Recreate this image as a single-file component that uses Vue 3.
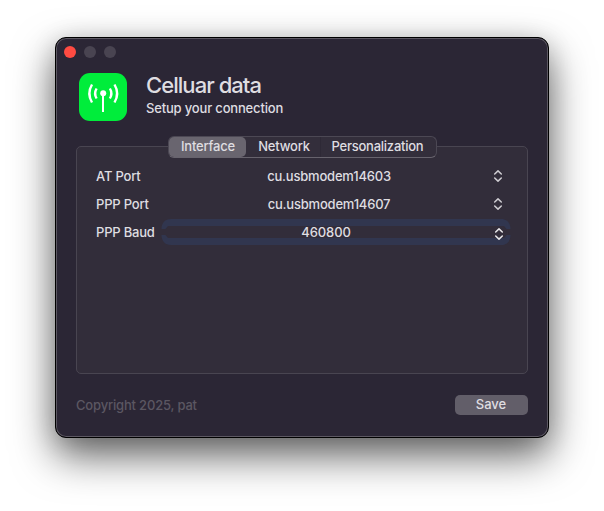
<script setup>
import { ref } from 'vue'

const tabs = [
  { name: 'Interface', cls: 'interface' },
  { name: 'Network', cls: 'network' },
  { name: 'Personalization', cls: 'personalization' },
]
const active = ref('Interface')
const fields = [
  { label: 'AT Port', value: 'cu.usbmodem14603', cls: 'at' },
  { label: 'PPP Port', value: 'cu.usbmodem14607', cls: 'ppp' },
  { label: 'PPP Baud', value: '460800', cls: 'baud', focused: true },
]
</script>

<template>
  <main class="desktop">
    <section class="window">
      <div class="titlebar">
        <i class="light close"></i>
        <i class="light"></i>
        <i class="light"></i>
      </div>
      <header class="header">
        <svg class="app-icon" viewBox="0 0 48 48">
          <rect width="48" height="48" rx="11" fill="#00ed3b" />
          <g fill="none" stroke="#fff" stroke-width="2.4">
            <path d="M24 20V39" stroke-width="2" />
            <path d="M17.600 15.500Q14.600 20.500 17.600 25.500M30.900 15.500Q33.900 20.500 30.900 25.500" />
            <path d="M13 11.500Q7.700 20.500 13 29.500M35.500 11.500Q40.800 20.500 35.500 29.500" />
          </g>
          <circle cx="24.200" cy="20.300" r="3" fill="#fff" />
        </svg>
        <div class="heading">
          <h1>Celluar data</h1>
          <p>Setup your connection</p>
        </div>
      </header>
      <section class="panel">
        <nav class="tabs">
          <button
            v-for="t in tabs"
            :key="t.name"
            :class="['tab', t.cls, { active: active === t.name }]"
            @click="active = t.name"
          >{{ t.name }}</button>
        </nav>
        <div class="fields">
          <div v-for="f in fields" :key="f.label" :class="['field', f.cls]">
            <span class="label">{{ f.label }}</span>
            <div class="select">
              <svg v-if="f.focused" class="ring" viewBox="0 0 350 26">
                <path
                  d="M0.500 10C0.500 4 4 0 10 0H340C346 0 349.500 4 349.500 10H345.500L343 7H7L4.500 10Z
                     M0.500 16C0.500 22 4 26 10 26H340C346 26 349.500 22 349.500 16H345.500L343 19H7L4.500 16Z"
                  fill="#31364f"
                />
              </svg>
              <span class="value">{{ f.value }}</span>
              <svg class="chevrons" viewBox="0 0 10 14">
                <path d="M1.700 5L5 1.900L8.300 5M1.700 9L5 12.100L8.300 9" />
              </svg>
            </div>
          </div>
        </div>
      </section>
      <footer class="footer">
        <span class="copyright">Copyright 2025, pat</span>
        <button class="save">Save</button>
      </footer>
    </section>
  </main>
</template>

<style>
body { margin: 0; background: #fff; }
</style>

<style scoped>
* { box-sizing: border-box; }
.desktop {
  width: 604px;
  height: 511px;
  padding: 37px 0 0 55px;
  overflow: hidden;
  background: #fff;
  font-family: Inter, sans-serif;
  font-size: 13px;
  font-weight: 500;
  color: #dfdde1;
}
.window {
  width: 494px;
  height: 401px;
  display: flex;
  flex-direction: column;
  padding: 8px 21px 22px;
  border: 1px solid #000;
  border-radius: 11px;
  background: #2b2635;
  box-shadow: inset 0 0 0 1px #5c5862, 0 18px 42px rgba(0, 0, 0, 0.6), 0 4px 24px rgba(0, 0, 0, 0.15);
}
.titlebar {
  display: flex;
  gap: 8px;
  height: 12px;
  margin-left: -13px;
}
.light {
  width: 12px;
  height: 12px;
  border-radius: 50%;
  background: #494451;
}
.close { background: #ff4b42; }
.header {
  display: flex;
  gap: 19px;
  height: 48px;
  margin: 15px 0 0 2px;
}
.app-icon { width: 48px; height: 48px; flex: none; }
.heading {
  display: flex;
  flex-direction: column;
  margin-top: -1px;
  white-space: nowrap;
}
h1 {
  margin: 0;
  font-size: 22px;
  line-height: 26px;
  font-weight: 450;
  letter-spacing: -0.95px;
}
p { margin: 2px 0 0; line-height: 16px; letter-spacing: -0.17px; }
.panel {
  display: flex;
  flex-direction: column;
  align-items: center;
  width: 452px;
  height: 228px;
  margin-top: 25px;
  margin-left: -1px;
  border: 1px solid #494551;
  border-radius: 5px;
  background: #322d3a;
}
.tabs {
  display: flex;
  flex: none;
  width: 269px;
  height: 22px;
  margin-top: -11px;
  margin-left: 1px;
  border: 1px solid #4c4854;
  border-bottom-color: #67636d;
  border-radius: 6px;
  background: #332e3b;
}
button {
  padding: 0;
  border: 0;
  font: inherit;
  color: inherit;
  background: none;
  white-space: nowrap;
}
.tab { height: 20px; line-height: 18px; padding-bottom: 2px; border-radius: 5px; letter-spacing: -0.2px; }
.interface { width: 77px; padding-left: 1px; }
.network { width: 75px; padding-left: 2px; border-right: 1px solid #2e2936; border-radius: 0; }
.personalization { width: 115px; letter-spacing: -0.25px; padding-right: 2px; }
.active { background: #69656f; }
.fields {
  align-self: stretch;
  display: flex;
  flex-direction: column;
  gap: 8px;
  padding: 8px 17px 0 19px;
}
.field { display: flex; height: 20px; align-items: center; }
.label { width: 65px; white-space: nowrap; letter-spacing: -0.2px; }
.select {
  position: relative;
  flex: 1;
  display: flex;
  height: 26px;
  margin: -3px 0;
  align-items: center;
}
.value {
  position: relative;
  width: 335px;
  padding-left: 1px;
  text-align: center;
  letter-spacing: -0.2px;
}
.baud .value { width: 329px; margin-right: 7px; letter-spacing: -0.1px; }
.chevrons {
  position: relative;
  width: 10px;
  height: 14px;
  margin-left: -3px;
  fill: none;
  stroke: #cfcdd2;
  stroke-width: 1.5;
  stroke-linecap: round;
  stroke-linejoin: round;
}
.baud .chevrons { top: 2px; stroke: #e8e7ea; }
.ring { position: absolute; left: 0; top: 0; width: 350px; height: 26px; }
.footer {
  display: flex;
  justify-content: space-between;
  align-items: center;
  height: 20px;
  width: 452px;
  margin: 21px 0 0 -1px;
}
.copyright { color: #5b5762; letter-spacing: -0.18px; }
.save {
  width: 73px;
  height: 20px;
  padding: 0 1px 1px 0;
  border-radius: 5px;
  background: #625e69;
  line-height: 19px;
}
</style>
